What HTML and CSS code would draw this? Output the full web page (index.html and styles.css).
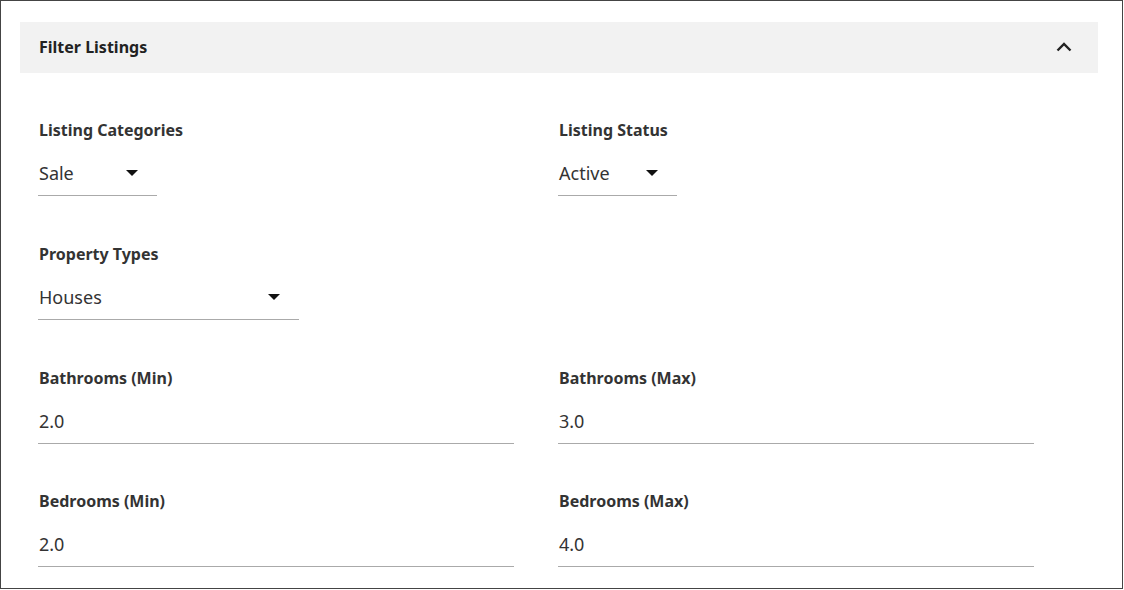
FILE: index.html
```html
<!doctype html>
<html lang="en">
<head>
    <meta charset="UTF-8">
    <title>Filter Listings</title>
    <link rel="stylesheet" href="styles.css">
</head>
<body>
<div class="panel">
    <div class="panel_head">
        <span class="panel_title">Filter Listings</span>
        <svg class="chevron" width="16" height="10" viewBox="0 0 16 10">
            <path d="M1.5 8.5 L8 2 L14.5 8.5" fill="none" stroke="#222" stroke-width="2.4"/>
        </svg>
    </div>

    <div class="filters">
        <div class="field">
            <label>Listing Categories</label>
            <div class="select w_small">
                <span>Sale</span>
                <b class="caret"></b>
            </div>
        </div>
        <div class="field">
            <label>Listing Status</label>
            <div class="select w_small">
                <span>Active</span>
                <b class="caret"></b>
            </div>
        </div>

        <div class="field">
            <label>Property Types</label>
            <div class="select w_mid">
                <span>Houses</span>
                <b class="caret"></b>
            </div>
        </div>
        <div class="field"></div>

        <div class="field">
            <label>Bathrooms (Min)</label>
            <div class="input">2.0</div>
        </div>
        <div class="field">
            <label>Bathrooms (Max)</label>
            <div class="input">3.0</div>
        </div>

        <div class="field">
            <label>Bedrooms (Min)</label>
            <div class="input">2.0</div>
        </div>
        <div class="field">
            <label>Bedrooms (Max)</label>
            <div class="input">4.0</div>
        </div>
    </div>
</div>
</body>
</html>
```

FILE: styles.css
```css
* {
    margin: 0;
    padding: 0;
    box-sizing: border-box;
}

body {
    font-family: "Noto Sans", "Open Sans", sans-serif;
    color: #333;
    background: #fff;
}

.panel {
    width: 1123px;
    height: 589px;
    border: 1px solid #444;
    padding: 21px 24px 0 19px;
}

.panel_head {
    height: 51px;
    background: #f2f2f2;
    display: flex;
    align-items: center;
    justify-content: space-between;
    padding: 0 26px 1px 19px;
}

.panel_title {
    font-size: 16px;
    font-weight: 700;
    color: #222;
}

.chevron {
    display: block;
}

.filters {
    display: grid;
    grid-template-columns: 476px 476px;
    column-gap: 44px;
    row-gap: 47.8px;
    padding: 47px 0 0 18px;
}

.field label {
    display: block;
    font-size: 16px;
    font-weight: 700;
    line-height: 20px;
    margin-bottom: 15px;
    padding-left: 1px;
    color: #333;
}

.select,
.input {
    font-size: 18px;
    line-height: 24px;
    padding: 6px 0 10px 1px;
    border-bottom: 1px solid #aaa;
    color: #333;
}

.select {
    display: flex;
    align-items: center;
    justify-content: space-between;
    padding-right: 19px;
}

.w_small {
    width: 119px;
}

.w_mid {
    width: 261px;
}

.caret {
    width: 0;
    height: 0;
    border-left: 6px solid transparent;
    border-right: 6px solid transparent;
    border-top: 6px solid #111;
}
```
